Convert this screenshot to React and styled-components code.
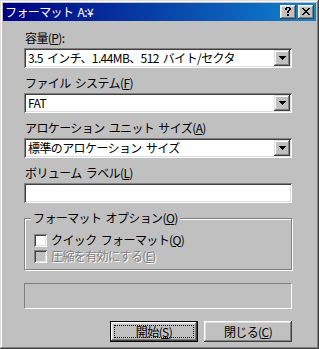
import React from 'react'
import styled, { createGlobalStyle } from 'styled-components'

const GlobalStyle = createGlobalStyle`
  html, body {
    margin: 0;
    padding: 0;
    background: #c0c0c0;
  }
  body {
    font-family: "Noto Sans CJK JP", "DejaVu Sans", sans-serif;
    font-size: 12px;
    letter-spacing: -0.6px;
    word-spacing: 2px;
    color: #000;
  }
`;

// pixel patterns for the title bar buttons
const CLOSE_PX = [
  'XX....XX',
  '.XX..XX.',
  '..XXXX..',
  '...XX...',
  '..XXXX..',
  '.XX..XX.',
  'XX....XX',
];

const HELP_PX = [
  '.XXXX.',
  'XX..XX',
  'XX..XX',
  '...XX.',
  '..XX..',
  '..XX..',
  '......',
  '..XX..',
  '..XX..',
];

const PixelIcon = ({ rows }) => (
  <svg
    width={rows[0].length}
    height={rows.length}
    viewBox={`0 0 ${rows[0].length} ${rows.length}`}
    shapeRendering="crispEdges"
  >
    {rows.map((row, y) =>
      row.split('').map((c, x) =>
        c === 'X' ? <rect key={`${x}-${y}`} x={x} y={y} width="1" height="1" fill="#000" /> : null
      )
    )}
  </svg>
);

const Arrow = () => (
  <svg width="7" height="4" viewBox="0 0 7 4" shapeRendering="crispEdges">
    <rect x="0" y="0" width="7" height="1" fill="#000" />
    <rect x="1" y="1" width="5" height="1" fill="#000" />
    <rect x="2" y="2" width="3" height="1" fill="#000" />
    <rect x="3" y="3" width="1" height="1" fill="#000" />
  </svg>
);

const App = () => {
  return (
    <>
      <GlobalStyle />
      <Window>
        <TitleBar>
          <Title>フォーマット A:¥</Title>
          <Caps>
            <CapButton><PixelIcon rows={HELP_PX} /></CapButton>
            <CapButton $gap><PixelIcon rows={CLOSE_PX} /></CapButton>
          </Caps>
        </TitleBar>
        <Body>
          <Label $top={9}>容量(<u>P</u>):</Label>
          <Combo>
            <ComboText>3.5 インチ、1.44MB、512 バイト/セクタ</ComboText>
            <DropButton><Arrow /></DropButton>
          </Combo>

          <Label>ファイル システム(<u>F</u>)</Label>
          <Combo>
            <ComboText>FAT</ComboText>
            <DropButton><Arrow /></DropButton>
          </Combo>

          <Label>アロケーション ユニット サイズ(<u>A</u>)</Label>
          <Combo>
            <ComboText>標準のアロケーション サイズ</ComboText>
            <DropButton><Arrow /></DropButton>
          </Combo>

          <Label>ボリューム ラベル(<u>L</u>)</Label>
          <Field />

          <Group>
            <GroupLabel>フォーマット オプション(<u>O</u>)</GroupLabel>
            <CheckRow>
              <CheckBox />
              <span>クイック フォーマット(<u>Q</u>)</span>
            </CheckRow>
            <CheckRow $disabled>
              <CheckBox $disabled />
              <span>圧縮を有効にする(<u>E</u>)</span>
            </CheckRow>
          </Group>

          <Progress />

          <Buttons>
            <PushButton $default>
              <Focus>開始(<u>S</u>)</Focus>
            </PushButton>
            <PushButton>
              <Focus $hidden>閉じる(<u>C</u>)</Focus>
            </PushButton>
          </Buttons>
        </Body>
      </Window>
    </>
  )
}

export default App

const Window = styled.div`
  width: 319px;
  height: 349px;
  box-sizing: border-box;
  padding: 3px;
  background: #c0c0c0;
  box-shadow:
    inset -1px -1px #404040,
    inset 1px 1px #dfdfdf,
    inset -2px -2px #808080,
    inset 2px 2px #fff;
  display: flex;
  flex-direction: column;
`;

const TitleBar = styled.div`
  height: 18px;
  display: flex;
  align-items: center;
  justify-content: space-between;
  padding: 0 2px;
  background: linear-gradient(to right, #000080, #1084d0);
`;

const Title = styled.div`
  color: #fff;
  font-size: 12px;
  line-height: 18px;
  white-space: nowrap;
`;

const Caps = styled.div`
  display: flex;
`;

const CapButton = styled.div`
  width: 16px;
  height: 14px;
  margin-left: ${(p) => (p.$gap ? '2px' : '0')};
  box-sizing: border-box;
  background: #c0c0c0;
  display: flex;
  align-items: center;
  justify-content: center;
  padding-bottom: 1px;
  box-shadow:
    inset -1px -1px #404040,
    inset 1px 1px #fff,
    inset -2px -2px #808080,
    inset 2px 2px #dfdfdf;
`;

const Body = styled.div`
  display: flex;
  flex-direction: column;
  padding: 0 24px 0 21px;
`;

const Label = styled.div`
  height: 16px;
  line-height: 16px;
  margin-top: ${(p) => (p.$top ?? 7)}px;
  margin-bottom: 2px;
  white-space: nowrap;
  padding-left: 1px;
`;

const sunken = `
  box-shadow:
    inset 1px 1px #808080,
    inset -1px -1px #fff,
    inset 2px 2px #404040,
    inset -2px -2px #dfdfdf;
`;

const Combo = styled.div`
  height: 20px;
  box-sizing: border-box;
  padding: 2px;
  background: #fff;
  display: flex;
  align-items: stretch;
  ${sunken}
`;

const ComboText = styled.div`
  flex: 1;
  padding-left: 2px;
  line-height: 16px;
  white-space: nowrap;
  overflow: hidden;
`;

const DropButton = styled.div`
  width: 16px;
  height: 16px;
  background: #c0c0c0;
  display: flex;
  align-items: center;
  justify-content: center;
  box-shadow:
    inset -1px -1px #404040,
    inset 1px 1px #dfdfdf,
    inset -2px -2px #808080,
    inset 2px 2px #fff;
`;

const Field = styled.div`
  height: 20px;
  background: #fff;
  ${sunken}
`;

const Group = styled.div`
  position: relative;
  margin-top: 15px;
  height: 52px;
  box-sizing: border-box;
  border: 1px solid #808080;
  box-shadow: inset 1px 1px #fff, 1px 1px #fff;
  padding: 13px 0 0 9px;
  display: flex;
  flex-direction: column;
`;

const GroupLabel = styled.div`
  position: absolute;
  top: -9px;
  left: 6px;
  padding: 0 2px;
  background: #c0c0c0;
  line-height: 16px;
  white-space: nowrap;
`;

const CheckRow = styled.div`
  display: flex;
  align-items: center;
  height: 16px;
  line-height: 16px;
  white-space: nowrap;
  color: ${(p) => (p.$disabled ? '#808080' : '#000')};
  text-shadow: ${(p) => (p.$disabled ? '1px 1px #fff' : 'none')};
`;

const CheckBox = styled.div`
  width: 13px;
  height: 13px;
  flex-shrink: 0;
  margin-right: 4px;
  background: ${(p) => (p.$disabled ? '#c0c0c0' : '#fff')};
  ${sunken}
`;

const Progress = styled.div`
  margin-top: 13px;
  height: 26px;
  box-sizing: border-box;
  border: 1px solid;
  border-color: #808080 #fff #fff #808080;
`;

const Buttons = styled.div`
  display: flex;
  justify-content: flex-end;
  gap: 6px;
  margin-top: 12px;
`;

const PushButton = styled.div`
  width: 88px;
  height: 21px;
  box-sizing: border-box;
  padding: ${(p) => (p.$default ? '3px' : '2px')};
  background: #c0c0c0;
  border: ${(p) => (p.$default ? '1px solid #000' : 'none')};
  display: flex;
  box-shadow: inset -1px -1px #404040, inset 1px 1px #fff, inset -2px -2px #808080, inset 2px 2px #dfdfdf;
`;

const Focus = styled.div`
  flex: 1;
  display: flex;
  align-items: center;
  justify-content: center;
  outline: ${(p) => (p.$hidden ? 'none' : '1px dotted #000')};
  outline-offset: -1px;
  line-height: 14px;
  white-space: nowrap;
`;
